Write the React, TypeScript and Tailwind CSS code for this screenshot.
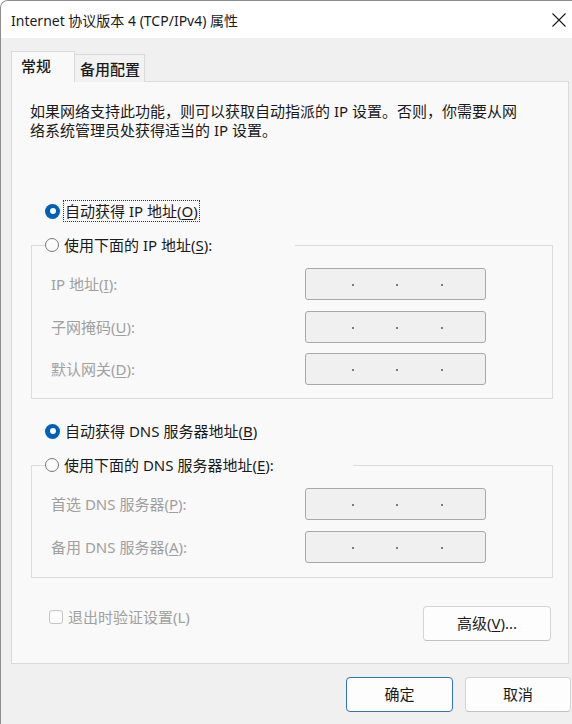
import React from "react";

const U = ({ children }: { children: React.ReactNode }) => (
  <span className="underline underline-offset-[2px] decoration-1">{children}</span>
);

const RadioOn = () => (
  <span className="w-[15px] h-[15px] rounded-full bg-[#005fb8] flex items-center justify-center shrink-0">
    <span className="w-[6px] h-[6px] rounded-full bg-white" />
  </span>
);

const RadioOff = () => (
  <span className="w-[14px] h-[14px] rounded-full border border-[#7a7a7a] bg-[#fbfbfb] shrink-0" />
);

const IpBox = () => (
  <div className="w-[181px] h-[32px] border border-[#a8a8a8] rounded-[3px] bg-[#f0f0f0] flex items-center pt-[2px]">
    <span className="flex-1" />
    <span className="w-[2px] h-[2px] bg-[#7c7c7c] ml-[3px]" />
    <span className="flex-1" />
    <span className="w-[2px] h-[2px] bg-[#7c7c7c]" />
    <span className="flex-1" />
    <span className="w-[2px] h-[2px] bg-[#7c7c7c]" />
    <span className="flex-1" />
  </div>
);

const Row = ({ label, mt }: { label: React.ReactNode; mt: string }) => (
  <div className={`flex items-center h-[32px] ${mt}`}>
    <div className="w-[273px] pl-[19px] text-[#a0a0a0] whitespace-nowrap">{label}</div>
    <IpBox />
  </div>
);

export default function App() {
  return (
    <div className="w-[572px] h-[724px] overflow-hidden bg-[#f0f0f0] border-l border-t border-[#8e8e8e] rounded-tl-[8px] flex flex-col text-[15px] text-[#1a1a1a] font-['Noto_Sans','Noto_Sans_CJK_SC',sans-serif]">
      {/* Title bar */}
      <div className="h-[37px] bg-white flex items-center justify-between pl-[10px] pr-[6px] pt-[2px] shrink-0">
        <span className="whitespace-nowrap text-[14px]">Internet 协议版本 4 (TCP/IPv4) 属性</span>
        <svg width="14" height="14" viewBox="0 0 14 14" className="mb-[2px]">
          <path d="M0.5 0.5 L13.5 13.5 M13.5 0.5 L0.5 13.5" stroke="#1a1a1a" strokeWidth="1.1" fill="none" />
        </svg>
      </div>

      {/* Body */}
      <div className="flex-1 pl-[10px] pt-[13px]">
        {/* Tabs */}
        <div className="flex items-end h-[31px]">
          <div className="relative z-10 w-[64px] h-[31px] border border-b-0 border-[#dadada] bg-[#f9f9f9] flex items-center pl-[9px] pb-[2px] font-medium text-[15px]">
            常规
          </div>
          <div className="w-[70px] h-[28px] border border-b-0 border-l-0 border-[#dadada] bg-[#f2f2f2] flex items-center pl-[5px] pt-[1px] font-medium text-[15px]">
            备用配置
          </div>
        </div>

        {/* Panel */}
        <div className="-mt-px w-[558px] h-[583px] border border-[#dadada] bg-[#f9f9f9] flex flex-col">
          <p className="mt-[20px] pl-[18px] leading-[19px] whitespace-nowrap">
            如果网络支持此功能，则可以获取自动指派的 IP 设置。否则，你需要从网
            <br />
            络系统管理员处获得适当的 IP 设置。
          </p>

          <div className="mt-[60px] ml-[33px] h-[22px] flex items-center">
            <RadioOn />
            <span className="ml-[3px] px-[1px] border border-dotted border-[#333] leading-[20px] whitespace-nowrap">
              自动获得 IP 地址(<U>O</U>)
            </span>
          </div>

          <fieldset className="mt-[12px] ml-[19px] w-[522px] border border-[#dcdcdc] pb-[13px]">
            <legend className="ml-[13px] w-[250px] h-[22px] flex items-center">
              <RadioOff />
              <span className="ml-[5px] whitespace-nowrap">使用下面的 IP 地址(<U>S</U>):</span>
            </legend>
            <Row label={<>IP 地址(<U>I</U>):</>} mt="mt-[12px]" />
            <Row label={<>子网掩码(<U>U</U>):</>} mt="mt-[11px]" />
            <Row label={<>默认网关(<U>D</U>):</>} mt="mt-[10px]" />
          </fieldset>

          <div className="mt-[21px] ml-[33px] h-[22px] flex items-center">
            <RadioOn />
            <span className="ml-[5px] whitespace-nowrap">
              自动获得 DNS 服务器地址(<U>B</U>)
            </span>
          </div>

          <fieldset className="mt-[12px] ml-[19px] w-[522px] border border-[#dcdcdc] pb-[14px]">
            <legend className="ml-[13px] w-[308px] h-[22px] flex items-center">
              <RadioOff />
              <span className="ml-[5px] whitespace-nowrap">使用下面的 DNS 服务器地址(<U>E</U>):</span>
            </legend>
            <Row label={<>首选 DNS 服务器(<U>P</U>):</>} mt="mt-[12px]" />
            <Row label={<>备用 DNS 服务器(<U>A</U>):</>} mt="mt-[11px]" />
          </fieldset>

          <div className="mt-[28px] flex items-start justify-between">
            <div className="ml-[37px] h-[22px] flex items-center">
              <span className="w-[14px] h-[14px] rounded-[3px] border border-[#c6c6c6] bg-[#fbfbfb]" />
              <span className="ml-[5px] text-[#a0a0a0] whitespace-nowrap">退出时验证设置(L)</span>
            </div>
            <button className="mr-[17px] w-[128px] h-[35px] rounded-[4px] border border-[#d4d4d4] border-b-[#c2c2c2] bg-[#fdfdfd] flex items-center justify-center">
              高级(<U>V</U>)...
            </button>
          </div>
        </div>

        {/* Bottom buttons */}
        <div className="mt-[13px] flex justify-end gap-[12px] pr-[1px]">
          <button className="w-[107px] h-[35px] rounded-[4px] border border-[#2f74c0] bg-[#fdfdfd] flex items-center justify-center">
            确定
          </button>
          <button className="w-[106px] h-[35px] rounded-[4px] border border-[#d4d4d4] border-b-[#c2c2c2] bg-[#fdfdfd] flex items-center justify-center">
            取消
          </button>
        </div>
      </div>
    </div>
  );
}
